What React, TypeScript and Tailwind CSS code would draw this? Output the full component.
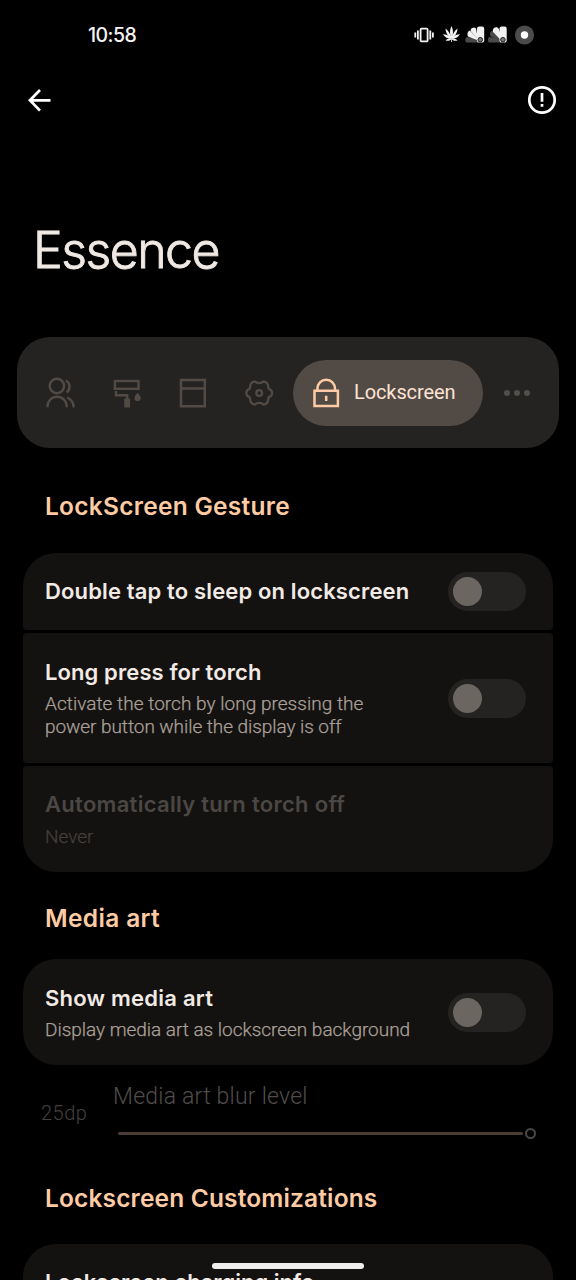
import type { ReactNode } from 'react';

const inter = 'font-[Inter,sans-serif]';
const roboto = 'font-[Roboto,sans-serif]';

function StatusIcons() {
  return (
    <svg className="block h-[24px] w-[124px]" viewBox="412 23 124 24" fill="none">
      <g stroke="#f2f2f2" strokeWidth="1.8">
        <rect x="420.6" y="28.6" width="7" height="12.8" rx="0.8" />
        <path d="M417.900 30.400v9M430.300 30.400v9M415.300 32.400v5M432.900 32.400v5" />
      </g>
      <g fill="#f2f2f2">
        <path d="M451.500 26c-2 4.200-1.800 8-.5 12h1c1.300-4 1.500-7.800-.5-12z" />
        <path d="M445.500 28.500c0 4.200 2.400 7.500 5.500 10l.5-1c-1.200-3.600-3.200-6.700-6-9zM457.500 28.500c0 4.200-2.400 7.500-5.500 10l-.5-1c1.200-3.600 3.200-6.700 6-9z" />
        <path d="M443 34.200c2 3 4.700 4.500 8 4.500l.3-1c-2.300-2.200-5-3.400-8.300-3.500zM460 34.200c-2 3-4.700 4.500-8 4.500l-.3-1c2.300-2.200 5-3.400 8.300-3.500z" />
        <path d="M445.500 40.400c2.300-2 4.300-2.300 5.500-2.200h1c1.200-.1 3.200.2 5.500 2.200-2.400.8-4.200.4-5.600-.9l.1 2.500h-.9l.1-2.500c-1.500 1.300-3.300 1.700-5.700.9z" />
      </g>
      <g>
        <path d="M466.200 37l12 1.500v4h-12.200c-1-1.800-.8-4 .2-5.500z" fill="#4a4a4a" />
        <path d="M468.600 31.200c.8-.6 1.600-.4 2.300.4l8.600 9.400-11.500-4.600c-1-1.800-.6-4.200.6-5.200z" fill="#f2f2f2" />
        <path d="M472.200 28c1.600-1 3-.6 3.800.6l1.500 8-.2 2.400-6.600-8c-.2-1.200.3-2.400 1.500-3z" fill="#f2f2f2" />
        <rect x="477" y="26.400" width="7.200" height="16.200" rx="2.200" fill="#f2f2f2" />
        <circle cx="480.300" cy="39.700" r="2.300" fill="#777" stroke="#222" strokeWidth="1" />
      </g>
      <g>
        <path d="M488.800 37l12 1.500v4h-12.200c-1-1.800-.8-4 .2-5.500z" fill="#4a4a4a" />
        <path d="M491.200 31.200c.8-.6 1.600-.4 2.300.4l8.600 9.400-11.500-4.600c-1-1.800-.6-4.200.6-5.200z" fill="#4a4a4a" />
        <path d="M494 28c1.800-1.200 3.600-.6 4.600.6l3 8-1.300 2.800-7.200-7.400c-.6-1.600-.1-3.400.9-4z" fill="#f2f2f2" />
        <rect x="499.500" y="26.400" width="7.200" height="16.200" rx="2.200" fill="#f2f2f2" />
        <circle cx="502.900" cy="39.700" r="2.300" fill="#777" stroke="#222" strokeWidth="1" />
      </g>
      <circle cx="524.500" cy="35" r="9.600" fill="#4b4b4b" />
      <circle cx="524.500" cy="35" r="3.700" fill="#fff" />
    </svg>
  );
}

function UsersIcon() {
  return (
    <svg className="block size-[32px]" viewBox="0 0 32 32" fill="none" stroke="#524a45" strokeWidth="2.400">
      <circle cx="11.900" cy="9" r="7.200" />
      <path d="M2.500 30.300v-1a9.600 9.600 0 0 1 19.200 0v1M20.800 3.500c4.600 2.200 5 8.900.8 12M22.200 20.500c3.400 1.600 6.200 4.800 6.600 9.800" />
    </svg>
  );
}

function RollerIcon() {
  return (
    <svg className="block size-[32px]" viewBox="0 0 32 32" fill="none" stroke="#524a45" strokeWidth="2.400">
      <rect x="3.900" y="4" width="23.600" height="7.800" />
      <path d="M5 14v4.200h11.200v4" />
      <path d="M13.200 21.500h5.800v9h-5.800z" fill="#524a45" stroke="none" />
      <path d="M26.600 15.800c1.900 2.200 3.100 3.700 3.100 5.200a3.100 3.100 0 0 1-6.200 0c0-1.500 1.200-3 3.100-5.200z" fill="#524a45" stroke="none" />
    </svg>
  );
}

function WindowIcon() {
  return (
    <svg className="block size-[32px]" viewBox="0 0 32 32" fill="none" stroke="#524a45" strokeWidth="2.500">
      <path d="M4 3h23.800v26.300H4zM4 11.500h23.800" />
    </svg>
  );
}

function GearIcon() {
  return (
    <svg className="block size-[32px]" viewBox="0 0 32 32" fill="none" stroke="#524a45" strokeWidth="2.300" strokeLinejoin="round">
      <path d="M27.800 12.800Q30.400 16 27.800 19.200Q25 19.800 25.200 22.800Q24.800 26.800 20.600 27.600Q18.800 25.800 16.200 25.800Q13.600 25.800 11.800 27.600Q7.600 26.800 7.200 22.800Q7.400 19.800 4.600 19.200Q2 16 4.600 12.800Q7.400 12.200 7.200 9.200Q7.600 5.200 11.800 4.400Q13.600 6.200 16.200 6.200Q18.800 6.200 20.600 4.400Q24.800 5.200 25.200 9.200Q25 12.200 27.800 12.800Z" />
      <circle cx="16.200" cy="16" r="2.900" />
    </svg>
  );
}

function LockIcon() {
  return (
    <svg className="block size-[32px]" viewBox="0 0 32 32" fill="none" stroke="#ffcba4" strokeWidth="2.500">
      <path d="M4.500 13.800h23.400v15.200H4.500zM7.400 13.800v-2a8.800 9 0 0 1 17.600 0v2M16.200 18.800v5.200" />
    </svg>
  );
}

function Toggle() {
  return (
    <div className="flex h-[39px] w-[78px] shrink-0 items-center rounded-full bg-[#252321] pl-[5px]">
      <div className="size-[29px] rounded-full bg-[#6b6660]" />
    </div>
  );
}

function SectionTitle({ className, children }: { className: string; children: ReactNode }) {
  return (
    <h2 className={`${inter} whitespace-nowrap pl-[45px] text-[24.500px] leading-[30px] font-[560] text-[#ffcba4] ${className}`}>
      {children}
    </h2>
  );
}

function RowTitle({ className, children }: { className: string; children: ReactNode }) {
  return <div className={`${inter} whitespace-nowrap text-[22px] leading-[28px] font-semibold ${className}`}>{children}</div>;
}

function Description({ className, children }: { className: string; children: ReactNode }) {
  return (
    <div className={`${roboto} whitespace-nowrap text-[19px] leading-[23px] font-light [-webkit-text-stroke:0.25px_currentColor] ${className}`}>
      {children}
    </div>
  );
}

export default function App() {
  return (
    <div className="flex h-[1280px] w-[576px] flex-col overflow-hidden bg-black">
      <header className="flex h-[70px] shrink-0 items-center justify-between pr-[40px] pl-[88px]">
        <span className={`${inter} pt-[2px] text-[19.500px] font-medium tracking-[-0.550px] text-[#f4f4f4]`}>10:58</span>
        <StatusIcons />
      </header>

      <nav className="flex h-[60px] shrink-0 items-center justify-between pr-[19px] pl-[27px]">
        <svg className="block h-[24px] w-[25px]" viewBox="0 0 25 24" fill="none" stroke="#fff" strokeWidth="2.700">
          <path d="M23.500 12.300H3M13 2L2.900 12.300l10.100 10.300" />
        </svg>
        <svg className="block size-[30px]" viewBox="0 0 30 30" fill="none" stroke="#fff" strokeWidth="2.700">
          <circle cx="15" cy="15" r="12.700" />
          <path d="M15 8v8.700M15 19v2.800" />
        </svg>
      </nav>

      <h1 className={`${inter} mt-[90px] h-[60px] shrink-0 pl-[33px] text-[50px] leading-[60px] font-light tracking-[-1.550px] text-[#efe8e3] [-webkit-text-stroke:0.9px_#efe8e3]`}>
        Essence
      </h1>

      <div className="mx-[17px] mt-[57px] flex h-[111px] shrink-0 items-center rounded-[33px] bg-[#252321] pl-[28px]">
        <div className="flex w-[248px] shrink-0 items-center gap-[34px]">
          <UsersIcon />
          <RollerIcon />
          <WindowIcon />
          <GearIcon />
        </div>
        <div className="flex h-[66px] w-[190px] shrink-0 items-center gap-[12px] rounded-full bg-[#524a45] pl-[17px]">
          <LockIcon />
          <span className={`${roboto} -mt-[2px] text-[20px] tracking-[-0.100px] text-[#fde3d3]`}>Lockscreen</span>
        </div>
        <div className="ml-[21px] flex gap-[4px]">
          <div className="size-[6px] rounded-full bg-[#524e4b]" />
          <div className="size-[6px] rounded-full bg-[#524e4b]" />
          <div className="size-[6px] rounded-full bg-[#524e4b]" />
        </div>
      </div>

      <SectionTitle className="mt-[43px] tracking-[0.270px]">LockScreen Gesture</SectionTitle>

      <section className="mx-[23px] mt-[32px] flex shrink-0 flex-col gap-[3px]">
        <div className="flex h-[77px] items-center justify-between rounded-t-[33px] rounded-b-[4px] bg-[#141210] pr-[27.500px] pl-[22px]">
          <RowTitle className="-mt-[2px] tracking-[0.140px] text-[#f1eae5]">Double tap to sleep on lockscreen</RowTitle>
          <Toggle />
        </div>
        <div className="flex h-[130px] items-center justify-between rounded-[4px] bg-[#141210] pr-[27.500px] pl-[22px]">
          <div className="flex flex-col gap-[6px]">
            <RowTitle className="tracking-[0.100px] text-[#f1eae5]">Long press for torch</RowTitle>
            <Description className="text-[#aaa09a]">
              <div className="tracking-[0.030px]">Activate the torch by long pressing the</div>
              <div className="tracking-[-0.060px]">power button while the display is off</div>
            </Description>
          </div>
          <Toggle />
        </div>
        <div className="flex h-[106px] flex-col justify-center gap-[7px] rounded-t-[4px] rounded-b-[33px] bg-[#141210] pb-[1px] pl-[22px]">
          <RowTitle className="tracking-[0.290px] text-[#4b4744]">Automatically turn torch off</RowTitle>
          <Description className="text-[#443f3c]">Never</Description>
        </div>
      </section>

      <SectionTitle className="mt-[31px] tracking-[0.350px]">Media art</SectionTitle>

      <section className="mx-[23px] mt-[26px] flex h-[106px] shrink-0 items-center justify-between rounded-[33px] bg-[#141210] pr-[27.500px] pl-[22px]">
        <div className="flex flex-col gap-[6px]">
          <RowTitle className="tracking-[0.240px] text-[#f1eae5]">Show media art</RowTitle>
          <Description className="tracking-[-0.030px] text-[#aaa09a]">Display media art as lockscreen background</Description>
        </div>
        <Toggle />
      </section>

      <section className="flex h-[92px] shrink-0 pl-[41px]">
        <div className={`${roboto} w-[72px] pt-[36px] text-[20px] leading-[24px] font-light tracking-[0.500px] text-[#444140]`}>25dp</div>
        <div className="flex flex-col">
          <div className={`${roboto} mt-[18px] text-[23px] leading-[28px] font-light tracking-[0.230px] text-[#504d4b]`}>Media art blur level</div>
          <div className="mt-[17px] ml-[5px] flex items-center">
            <div className="h-[3px] w-[405px] rounded-full bg-[#4a3d36]" />
            <div className="ml-[2px] size-[11px] rounded-full border-[2.500px] border-[#4b4744]" />
          </div>
        </div>
      </section>

      <SectionTitle className="mt-[26px] tracking-[0.150px]">Lockscreen Customizations</SectionTitle>

      <section className="relative mx-[23px] mt-[31px] h-[106px] shrink-0 rounded-[33px] bg-[#141210] pt-[24px] pl-[22px]">
        <RowTitle className="text-[#f1eae5]">Lockscreen charging info</RowTitle>
        <div className="absolute top-[19px] left-[189px] h-[6px] w-[152px] rounded-full bg-[#efeeec]" />
      </section>
    </div>
  );
}
